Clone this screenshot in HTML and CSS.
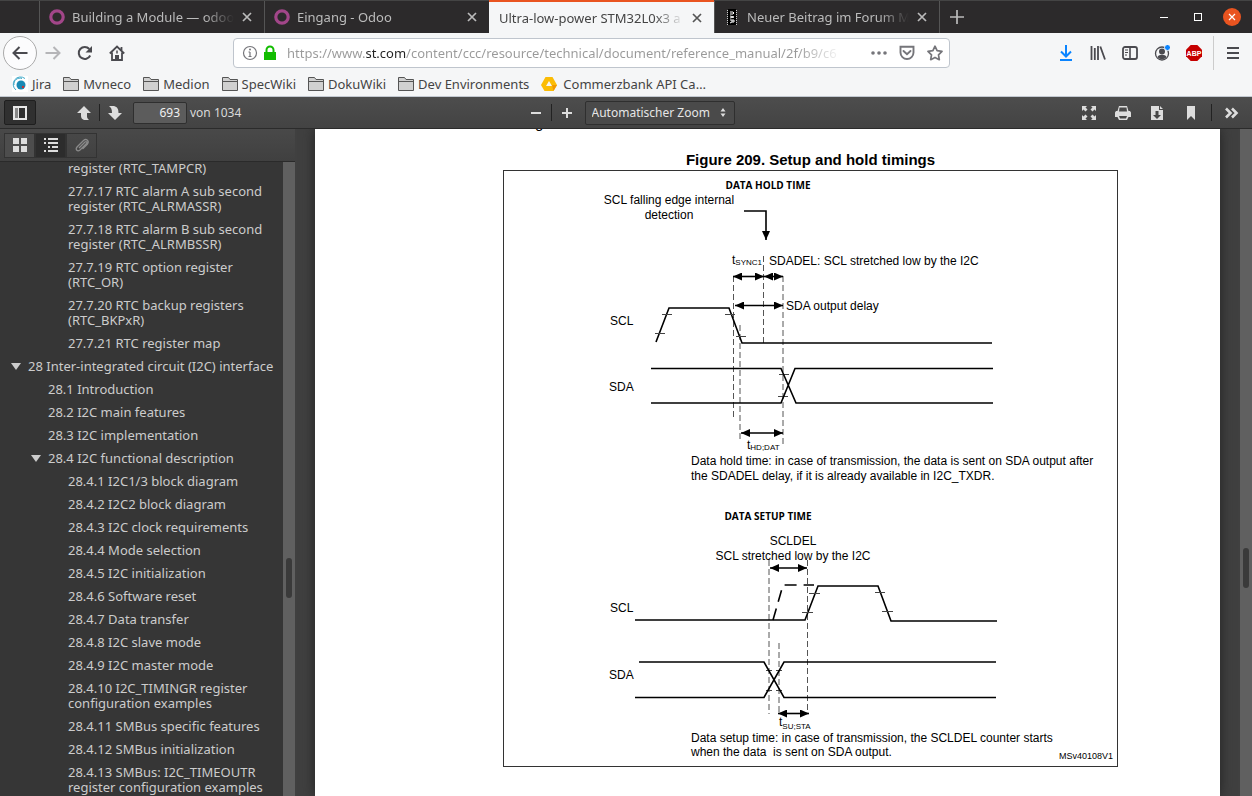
FILE: index.html
```
<!DOCTYPE html>
<html lang="de">
<head>
    <meta charset="UTF-8">
    <meta name="viewport" content="width=device-width, initial-scale=1.0">
    <title>Ultra-low-power STM32L0x3 reference manual</title>
    <link rel="stylesheet" href="styles.css">
</head>
<body>

<header class="browser">
    <div class="tab-bar">
        <div class="tab">
            <svg class="favicon" width="16" height="16" viewBox="0 0 16 16"><circle cx="8" cy="8" r="6.2" fill="none" stroke="#a24689" stroke-width="3.2"/></svg>
            <span class="tab-title">Building a Module — odoo</span>
            <button class="tab-close" aria-label="Tab schließen"><svg width="10" height="10" viewBox="0 0 10 10"><path d="M1 1l8 8M9 1l-8 8"/></svg></button>
        </div>
        <div class="tab">
            <svg class="favicon" width="16" height="16" viewBox="0 0 16 16"><circle cx="8" cy="8" r="6.2" fill="none" stroke="#a24689" stroke-width="3.2"/></svg>
            <span class="tab-title">Eingang - Odoo</span>
            <button class="tab-close" aria-label="Tab schließen"><svg width="10" height="10" viewBox="0 0 10 10"><path d="M1 1l8 8M9 1l-8 8"/></svg></button>
        </div>
        <div class="tab active">
            <span class="tab-title">Ultra-low-power STM32L0x3 a</span>
            <button class="tab-close" aria-label="Tab schließen"><svg width="10" height="10" viewBox="0 0 10 10"><path d="M1 1l8 8M9 1l-8 8"/></svg></button>
        </div>
        <div class="tab">
            <svg class="favicon" width="16" height="16" viewBox="0 0 16 16">
                <rect x="4" y="0" width="8" height="16" fill="#000"/>
                <path d="M3.500 1v15M12.500 1v15" stroke="#ccc" stroke-dasharray="1 1"/>
                <path d="M6 3h3l1 1-1 1H6M6 7l4 1-4 1M6 11h4v2H8v-2M8 13l-2 1" stroke="#fff" fill="none"/>
            </svg>
            <span class="tab-title">Neuer Beitrag im Forum Mik</span>
            <button class="tab-close" aria-label="Tab schließen"><svg width="10" height="10" viewBox="0 0 10 10"><path d="M1 1l8 8M9 1l-8 8"/></svg></button>
        </div>
        <button class="new-tab" aria-label="Neuer Tab"><svg width="14" height="14" viewBox="0 0 14 14"><path d="M7 0v14M0 7h14"/></svg></button>
        <div class="window-buttons">
            <button aria-label="Minimieren"><svg width="18" height="18" viewBox="0 0 18 18"><path d="M5 9.500h8" stroke="#fff"/></svg></button>
            <button aria-label="Maximieren"><svg width="18" height="18" viewBox="0 0 18 18"><rect x="5.500" y="5.500" width="7" height="7" fill="none" stroke="#fff"/></svg></button>
            <button aria-label="Schließen"><svg width="18" height="18" viewBox="0 0 18 18"><circle cx="9" cy="9" r="9" fill="#e95420"/><path d="M6 6l6 6M12 6l-6 6" stroke="#fff" stroke-width="1.2"/></svg></button>
        </div>
    </div>

    <div class="nav-bar">
        <button class="nav-button back" aria-label="Zurück"><svg width="16" height="16" viewBox="0 0 16 16"><path d="M15.500 8H1.500M7.500 2l-6 6 6 6" stroke-width="2"/></svg></button>
        <button class="nav-button forward" aria-label="Vor"><svg width="16" height="16" viewBox="0 0 16 16"><path d="M0.500 8h14M8.500 2l6 6-6 6" stroke-width="2"/></svg></button>
        <button class="nav-button" aria-label="Neu laden"><svg width="16" height="16" viewBox="0 0 16 16"><path d="M13.200 10.500A6 6 0 1 1 12.300 4" stroke-width="2"/><path d="M15 1v6.500H8.500z" fill="#4a4a4f" stroke="none"/></svg></button>
        <button class="nav-button" aria-label="Startseite"><svg width="16" height="16" viewBox="0 0 16 16"><path d="M.8 8.500L8 1.500l7.200 7M3 7.500V15h10V7.500M12.500 2v3.500" stroke-width="1.800"/><path d="M6 15v-5h4v5z" fill="#4a4a4f" stroke="none"/><path d="M8 5.500v3" stroke-width="1.500"/></svg></button>
        <div class="url-bar">
            <svg width="16" height="16" viewBox="0 0 16 16"><circle cx="8" cy="8" r="6.500" fill="none" stroke="#75757a" stroke-width="1.200"/><path d="M8 7v5M6.500 7H8M6.500 11.500h3" stroke="#75757a" stroke-width="1.200"/><circle cx="8" cy="4.500" r="1" fill="#75757a"/></svg>
            <svg width="16" height="16" viewBox="0 0 16 16"><path d="M2 7h12v8H2z" fill="#12bc00"/><path d="M4.500 8V5a3.500 3.500 0 0 1 7 0v3" fill="none" stroke="#12bc00" stroke-width="2"/></svg>
            <input type="text" class="url-input" aria-label="Adresse" value="https://www.st.com/content/ccc/resource/technical/document/reference_manual/2f/b9/c6">
            <button class="url-button" aria-label="Seitenaktionen"><svg width="16" height="16" viewBox="0 0 16 16" fill="#75757a"><circle cx="2" cy="8" r="1.800"/><circle cx="8" cy="8" r="1.800"/><circle cx="14" cy="8" r="1.800"/></svg></button>
            <button class="url-button" aria-label="Pocket"><svg width="16" height="16" viewBox="0 0 16 16" fill="none" stroke="#75757a" stroke-width="1.900"><path d="M1.500 1.800h13v5.700a6.500 6.500 0 0 1-13 0z"/><path d="M4.500 6L8 9.300 11.500 6" stroke-linecap="round"/></svg></button>
            <button class="url-button" aria-label="Lesezeichen"><svg width="16" height="16" viewBox="0 0 16 16" fill="none" stroke="#75757a" stroke-width="1.700" stroke-linejoin="round"><path d="M8 1.200l2.100 4.500 4.900.7-3.500 3.400.8 4.900L8 12.400l-4.300 2.300.8-4.900L1 6.400l4.900-.7z"/></svg></button>
        </div>
        <div class="nav-extras">
            <button class="nav-button" aria-label="Downloads"><svg width="16" height="16" viewBox="0 0 16 16"><path d="M8 0v11M3 6.500l5 5 5-5M2 15h12" stroke="#0a84ff" stroke-width="2"/></svg></button>
            <button class="nav-button" aria-label="Bibliothek"><svg width="16" height="16" viewBox="0 0 16 16"><path d="M1.500 1v14M4.800 3v12M8 1v14M10.300 1.500L15 14.500" stroke-width="1.800"/></svg></button>
            <button class="nav-button" aria-label="Sidebars"><svg width="16" height="16" viewBox="0 0 16 16"><rect x="1" y="2" width="14" height="12" rx="2" stroke-width="1.800"/><path d="M8 2v12" stroke-width="1.600"/><path d="M3 5h3M3 7.500h3M3 10h2"/></svg></button>
            <button class="nav-button" aria-label="Konto"><svg width="16" height="16" viewBox="0 0 16 16"><circle cx="8" cy="8.500" r="6.500" stroke-width="1.300"/><circle cx="8" cy="6.500" r="3" fill="#4a4a4f" stroke="none"/><path d="M3.500 12c1-3 8-3 9 0-2 3-7 3-9 0z" fill="#4a4a4f" stroke="none"/><circle cx="13.500" cy="2.500" r="3" fill="#0a84ff" stroke="#f5f6f7"/></svg></button>
            <button class="nav-button abp" aria-label="Adblock Plus"><svg width="16" height="16" viewBox="0 0 16 16"><path d="M4.700 0h6.600L16 4.700v6.600L11.300 16H4.700L0 11.300V4.700z" fill="#c60000" stroke="none"/><text x="8" y="11" class="abp-text">ABP</text></svg></button>
            <span class="nav-divider"></span>
            <button class="nav-button menu" aria-label="Menü"><svg width="16" height="16" viewBox="0 0 16 16"><path d="M2 3h12M2 8h12M2 13h12" stroke-width="2"/></svg></button>
        </div>
    </div>

    <nav class="bookmarks">
        <a href="#"><svg width="16" height="16" viewBox="0 0 16 16"><rect width="16" height="16" fill="#fff"/><circle cx="9" cy="9" r="4.500" fill="#1a8ab5"/><path d="M4 14A7 7 0 0 1 13 2.500M2 9a6 6 0 0 1 8-6.500" fill="none" stroke="#3fa9c9"/><circle cx="11" cy="11" r="1.200" fill="#c33"/></svg>Jira</a>
        <a href="#"><svg width="16" height="16" viewBox="0 0 16 16"><path d="M.5 14.500v-13h6l1.500 2h7.500v11z" fill="#d0d0d0" stroke="#555"/><path d="M1 5.500h14.500" stroke="#555"/></svg>Mvneco</a>
        <a href="#"><svg width="16" height="16" viewBox="0 0 16 16"><path d="M.5 14.500v-13h6l1.500 2h7.500v11z" fill="#d0d0d0" stroke="#555"/><path d="M1 5.500h14.500" stroke="#555"/></svg>Medion</a>
        <a href="#"><svg width="16" height="16" viewBox="0 0 16 16"><path d="M.5 14.500v-13h6l1.500 2h7.500v11z" fill="#d0d0d0" stroke="#555"/><path d="M1 5.500h14.500" stroke="#555"/></svg>SpecWiki</a>
        <a href="#"><svg width="16" height="16" viewBox="0 0 16 16"><path d="M.5 14.500v-13h6l1.500 2h7.500v11z" fill="#d0d0d0" stroke="#555"/><path d="M1 5.500h14.500" stroke="#555"/></svg>DokuWiki</a>
        <a href="#"><svg width="16" height="16" viewBox="0 0 16 16"><path d="M.5 14.500v-13h6l1.500 2h7.500v11z" fill="#d0d0d0" stroke="#555"/><path d="M1 5.500h14.500" stroke="#555"/></svg>Dev Environments</a>
        <a href="#" class="wide"><svg width="16" height="16" viewBox="0 0 16 16"><path d="M4.500 1h7L16 9l-3.500 6h-9L0 9z" fill="#fbbc05"/><path d="M12.500 15L16 9h-5z" fill="#f29900"/><path d="M8 5l3 5H5z" fill="#f5f6f7"/></svg>Commerzbank API Ca…</a>
    </nav>
</header>

<div class="pdf-toolbar">
    <div class="tools">
        <button class="tool toggled" aria-label="Sidebar umschalten"><svg width="16" height="16" viewBox="0 0 16 16"><path d="M2 2h12v12H2z" fill="none" stroke="#e8e8e8" stroke-width="2"/><path d="M3 3h3v10H3z" fill="#888"/><path d="M6.500 3v10" stroke="#e8e8e8"/></svg></button>
        <div class="tool-pair page-nav">
            <button class="tool narrow" aria-label="Vorherige Seite"><svg width="16" height="16" viewBox="0 0 16 16"><path d="M8 1l7 7h-4v3.500c0 1.500 1 2.500 2 3.500H8c-2-1-3-2-3-4V8H1z"/></svg></button>
            <span class="split"></span>
            <button class="tool narrow" aria-label="Nächste Seite"><svg width="16" height="16" viewBox="0 0 16 16"><path d="M8 15l7-7h-3.500c0-4-1-6-4.500-7H2c2 1.500 3 3 3 7H1z"/></svg></button>
        </div>
        <input type="text" id="pageNumber" class="page-number" value="693" aria-label="Seite">
        <label for="pageNumber" class="page-count">von 1034</label>
    </div>
    <div class="tools zoom-tools">
        <button class="tool narrow" aria-label="Verkleinern"><svg width="16" height="16" viewBox="0 0 16 16"><path d="M3 7h10v2H3z"/></svg></button>
        <span class="split"></span>
        <button class="tool narrow" aria-label="Vergrößern"><svg width="16" height="16" viewBox="0 0 16 16"><path d="M3 7h4V3h2v4h4v2H9v4H7V9H3z"/></svg></button>
        <div class="zoom-box">
            <select class="zoom-select" aria-label="Zoom">
                <option>Automatischer Zoom</option>
            </select>
            <svg class="zoom-arrows" width="6" height="10" viewBox="0 0 6 10"><path d="M3 0l2.500 3.500h-5zM3 9L.5 5.500h5z"/></svg>
        </div>
    </div>
    <div class="tools right">
        <button class="tool" aria-label="Präsentationsmodus"><svg width="16" height="16" viewBox="0 0 16 16"><path d="M1 1h5L4.500 2.500l2 2-2 2-2-2L1 6zM15 1v5l-1.500-1.500-2 2-2-2 2-2L10 1zM1 15v-5l1.500 1.500 2-2 2 2-2 2L6 15zM15 15h-5l1.500-1.500-2-2 2-2 2 2L15 10z"/></svg></button>
        <button class="tool" aria-label="Drucken"><svg width="16" height="16" viewBox="0 0 16 16"><path d="M4 1h8l1.500 5H15l1 1.500V12h-2.500L12 15H4l-1.500-3H0V7.500L1 6h1.500zM4.500 2.500L4 6.500h8l-.5-4zM4 11l1 2.500h6l1-2.500z" fill-rule="evenodd"/></svg></button>
        <button class="tool" aria-label="Herunterladen"><svg width="16" height="16" viewBox="0 0 16 16"><path d="M2 1h8v4h4v10H2zM11 1l3 3h-3zM6.500 6v4H4l4 4 4-4H9.500V6z" fill-rule="evenodd"/></svg></button>
        <button class="tool" aria-label="Aktuelle Ansicht"><svg width="16" height="16" viewBox="0 0 16 16"><path d="M4 1h8v14l-4-4-4 4z"/></svg></button>
        <span class="split"></span>
        <button class="tool" aria-label="Werkzeuge"><svg width="16" height="16" viewBox="0 0 16 16"><path d="M2 3.500L6.500 8 2 12.500M8 3.500L12.500 8 8 12.500" fill="none" stroke="#ddd" stroke-width="2.600"/></svg></button>
    </div>
</div>

<main class="workspace">
    <aside class="sidebar">
        <div class="sidebar-tools">
            <button aria-label="Miniaturansichten"><svg width="16" height="16" viewBox="0 0 16 16"><path d="M1 1h6v6H1zM9 1h6v6H9zM1 9h6v6H1zM9 9h6v6H9z"/></svg></button>
            <button class="on" aria-label="Dokumentstruktur"><svg width="16" height="16" viewBox="0 0 16 16"><path d="M1 1h2v2H1zM5 1h10v2H5zM1 5h2v2H1zM5 5h10v2H5zM5 9h2v2H5zM9 9h6v2H9zM1 13h2v2H1zM5 13h10v2H5z"/></svg></button>
            <button class="off" aria-label="Anhänge"><svg width="16" height="16" viewBox="0 0 16 16"><path d="M5 11l6-6c1.500-1 2.500.5 1.500 1.500l-6.500 6.500c-2.500 2-5-.5-3-3l6.500-6.500c3-2.500 6 .5 4 3.500l-5 5" fill="none" stroke="#8a8a8a" stroke-width="1.300"/></svg></button>
        </div>
        <div class="outline">
            <ul class="tree">
                <li class="level-3"><a href="#">register (RTC_TAMPCR)</a></li>
                <li class="level-3"><a href="#">27.7.17 RTC alarm A sub second register (RTC_ALRMASSR)</a></li>
                <li class="level-3"><a href="#">27.7.18 RTC alarm B sub second register (RTC_ALRMBSSR)</a></li>
                <li class="level-3"><a href="#">27.7.19 RTC option register (RTC_OR)</a></li>
                <li class="level-3"><a href="#">27.7.20 RTC backup registers (RTC_BKPxR)</a></li>
                <li class="level-3"><a href="#">27.7.21 RTC register map</a></li>
                <li class="level-1 open"><a href="#">28 Inter-integrated circuit (I2C) interface</a></li>
                <li class="level-2"><a href="#">28.1 Introduction</a></li>
                <li class="level-2"><a href="#">28.2 I2C main features</a></li>
                <li class="level-2"><a href="#">28.3 I2C implementation</a></li>
                <li class="level-2 open"><a href="#">28.4 I2C functional description</a></li>
                <li class="level-3"><a href="#">28.4.1 I2C1/3 block diagram</a></li>
                <li class="level-3"><a href="#">28.4.2 I2C2 block diagram</a></li>
                <li class="level-3"><a href="#">28.4.3 I2C clock requirements</a></li>
                <li class="level-3"><a href="#">28.4.4 Mode selection</a></li>
                <li class="level-3"><a href="#">28.4.5 I2C initialization</a></li>
                <li class="level-3"><a href="#">28.4.6 Software reset</a></li>
                <li class="level-3"><a href="#">28.4.7 Data transfer</a></li>
                <li class="level-3"><a href="#">28.4.8 I2C slave mode</a></li>
                <li class="level-3"><a href="#">28.4.9 I2C master mode</a></li>
                <li class="level-3"><a href="#">28.4.10 I2C_TIMINGR register configuration examples</a></li>
                <li class="level-3"><a href="#">28.4.11 SMBus specific features</a></li>
                <li class="level-3"><a href="#">28.4.12 SMBus initialization</a></li>
                <li class="level-3"><a href="#">28.4.13 SMBus: I2C_TIMEOUTR register configuration examples</a></li>
            </ul>
            <div class="scrollbar"><div class="thumb"></div></div>
        </div>
    </aside>

    <section class="viewer">
        <article class="page">
            <p class="body-text">g</p>
            <figure>
                <figcaption>Figure 209. Setup and hold timings</figcaption>
                <!-- user units follow the page, so the box starts at 503,170 -->
                <svg class="timing" width="615" height="598" viewBox="503 170 615 598">
                    <defs>
                        <marker id="arrow" viewBox="0 0 9 8" refX="9" refY="4" markerWidth="9" markerHeight="8" markerUnits="userSpaceOnUse" orient="auto-start-reverse">
                            <path d="M0 0l9 4-9 4z"/>
                        </marker>
                    </defs>
                    <rect class="frame" x="503.500" y="170.500" width="614" height="596"/>

                    <!-- data hold time -->
                    <text class="heading" x="768" y="189">DATA HOLD TIME</text>
                    <text class="mid" x="669" y="204">SCL falling edge internal</text>
                    <text class="mid" x="669" y="219">detection</text>
                    <path class="line" d="M744 211h22v29" marker-end="url(#arrow)"/>
                    <text x="732" y="264">t<tspan class="sub" dy="1">SYNC1</tspan></text>
                    <text x="769" y="265">SDADEL: SCL stretched low by the I2C</text>
                    <text x="786" y="310">SDA output delay</text>
                    <text x="610" y="325">SCL</text>
                    <text x="609" y="391">SDA</text>
                    <path class="dash" d="M733.500 276v141M763.500 256v88M783 276v168M740 325v116"/>
                    <g class="arrows">
                        <path d="M733 276.500h31"/>
                        <path d="M764 276.500h19"/>
                        <path d="M735 305.500h48"/>
                        <path d="M741 433h42"/>
                    </g>
                    <path class="line" d="M656 342l13-34h60l13 35h250"/>
                    <path class="tick" d="M662 314.500h10M655 333.500h10M725 314.500h10M736 336.500h10M779 374.500h10M778 396.500h10"/>
                    <path class="line" d="M651 368.500h130l15 34.500h197M651 403h130l14-34.500h198"/>
                    <text x="747" y="449">t<tspan class="sub" dy="1">HD;DAT</tspan></text>
                    <text x="691" y="465">Data hold time: in case of transmission, the data is sent on SDA output after</text>
                    <text x="691" y="480">the SDADEL delay, if it is already available in I2C_TXDR.</text>

                    <!-- data setup time -->
                    <text class="heading" x="768" y="520">DATA SETUP TIME</text>
                    <text class="mid" x="793" y="545">SCLDEL</text>
                    <text class="mid" x="793" y="560">SCL stretched low by the I2C</text>
                    <text x="610" y="612">SCL</text>
                    <text x="609" y="679">SDA</text>
                    <path class="dash" d="M769 560v154M807.500 560v153M779 643v71"/>
                    <g class="arrows">
                        <path d="M770 568h37"/>
                        <path d="M778 713.500h31"/>
                    </g>
                    <path class="line long-dash" d="M773 620l10-35h31"/>
                    <path class="line" d="M635 620h170l13-34h60l13 35h106"/>
                    <path class="tick" d="M809 593.500h11M802 612.500h11M875 592.500h10M882 611.500h11M766 670.500h6M776 670.500h6M766 690.500h6M776 690.500h6"/>
                    <path class="line" d="M639 662h125l20 35.500h212M635 697.500h129l20-35.500h212"/>
                    <text x="779" y="726">t<tspan class="sub" dy="3">SU;STA</tspan></text>
                    <text x="691" y="742">Data setup time: in case of transmission, the SCLDEL counter starts</text>
                    <text x="691" y="756" xml:space="preserve">when the data  is sent on SDA output.</text>
                    <text class="code" x="1059" y="759">MSv40108V1</text>
                </svg>
            </figure>
        </article>
        <div class="scrollbar"><div class="thumb"></div></div>
    </section>
</main>

</body>
</html>
```

FILE: styles.css
```
* {
    box-sizing: border-box;
}
body {
    margin: 0;
    height: 100vh;
    overflow: hidden;
    display: flex;
    flex-direction: column;
    font-family: "Noto Sans", sans-serif;
    font-size: 13px;
    background: #404040;
}
button {
    padding: 0;
    border: none;
    background: none;
    display: flex;
    align-items: center;
    justify-content: center;
    cursor: pointer;
}
svg {
    flex: none;
}

/* Tabs */
.browser {
    flex: none;
    background: #f5f6f7;
    border-bottom: 1px solid #c3c9d1;
}
.tab-bar {
    display: flex;
    height: 33px;
    padding-left: 39px;
    background: #2c2a2b;
    border-top: 1px solid #444;
}
.tab {
    display: flex;
    align-items: center;
    flex: 0 1 225px;
    min-width: 0;
    padding: 0 7px 0 9px;
    border-left: 1px solid #555;
    color: #bbb;
}
.tab.active {
    margin-top: -1px;
    padding-left: 10px;
    background: #f5f6f7;
    border-top: 2px solid #e95420;
    border-left: none;
    color: #444;
}
.favicon {
    margin-right: 7px;
}
.tab-title {
    flex: 1;
    overflow: hidden;
    white-space: nowrap;
    mask-image: linear-gradient(to left, transparent, #000 30px);
}
.tab-close {
    width: 20px;
    height: 20px;
    margin-left: 3px;
}
.tab-close svg, .new-tab svg {
    fill: none;
    stroke: #bbb;
    stroke-width: 1.7;
}
.active .tab-close svg {
    stroke: #555;
}
.new-tab {
    width: 34px;
    border-left: 1px solid #555;
}
.window-buttons {
    display: flex;
    gap: 16px;
    margin-left: auto;
    padding-right: 11px;
}

/* Navigation */
.nav-bar {
    display: flex;
    align-items: center;
    height: 40px;
    padding: 0 3px;
}
.nav-button {
    width: 32px;
    height: 32px;
}
.nav-button svg {
    fill: none;
    stroke: #4a4a4f;
}
.nav-button.back {
    width: 34px;
    height: 34px;
    background: #fcfcfd;
    border: 1px solid #aaa;
    border-radius: 50%;
}
.nav-button.forward svg {
    stroke: #b5b5b8;
}
.url-bar {
    display: flex;
    align-items: center;
    flex: 1;
    gap: 4px;
    height: 30px;
    margin: 0 100px;
    padding: 0 2px 0 8px;
    background: #fff;
    border: 1px solid #bfc5cd;
    border-radius: 4px;
}
.url-input {
    flex: 1;
    min-width: 0;
    margin-left: 5px;
    padding: 0;
    border: none;
    outline: none;
    font: inherit;
    color: transparent;
    background: linear-gradient(to right, #999 79px, #222 79px, #222 119px, #999 119px, #999 510px, transparent 556px);
    -webkit-background-clip: text;
    background-clip: text;
}
.url-button {
    width: 24px;
    height: 24px;
}
.nav-extras {
    display: flex;
    align-items: center;
}
.abp-text {
    font: bold 7px "Liberation Sans", sans-serif;
    fill: #fff;
    stroke: none;
    text-anchor: middle;
}
.nav-divider {
    height: 34px;
    margin: 0 3px;
    border-left: 1px solid #ccc;
}

/* Bookmarks */
.bookmarks {
    display: flex;
    align-items: center;
    gap: 12px;
    height: 23px;
    padding: 0 0 2px 12px;
}
.bookmarks a {
    display: flex;
    align-items: center;
    gap: 4px;
    color: #444;
    text-decoration: none;
    white-space: nowrap;
}
.bookmarks a.wide {
    gap: 6px;
}

/* PDF toolbar */
.pdf-toolbar {
    flex: none;
    display: grid;
    grid-template-columns: 1fr auto 1fr;
    height: 32px;
    padding: 0 4px;
    background: linear-gradient(#4d4d4d, #434343);
    border-bottom: 1px solid #2b2b2b;
    position: relative;
    z-index: 1;
}
.tools {
    display: flex;
    align-items: center;
    color: #d9d9d9;
}
.tools.right {
    justify-content: flex-end;
    gap: 2px;
}
.right .split {
    margin: 0 2px;
}
.zoom-tools {
    margin-left: 3px;
}
.tool {
    width: 32px;
    height: 25px;
    border-radius: 2px;
}
.tool.narrow {
    width: 30px;
}
.tool svg, .sidebar-tools svg, .zoom-arrows {
    fill: #ddd;
}
.tool.toggled {
    background: #303030;
    border: 1px solid #1f1f1f;
}
.tool-pair {
    display: flex;
    align-items: center;
}
.page-nav {
    margin-left: 33px;
}
.split {
    width: 1px;
    height: 17px;
    background: #222;
}
.page-number {
    width: 54px;
    height: 22px;
    margin: 0 3px;
    padding: 0 6px;
    border: 1px solid #2f2f2f;
    border-radius: 2px;
    background: #5c5c5c;
    color: #f0f0f0;
    font: inherit;
    font-size: 12px;
    text-align: right;
}
.page-count {
    font-size: 12px;
}
.zoom-box {
    position: relative;
    margin-left: 3px;
}
.zoom-select {
    appearance: none;
    display: block;
    width: 150px;
    height: 24px;
    padding: 0 6px;
    border: 1px solid #2f2f2f;
    border-radius: 2px;
    background: #4a4a4a;
    color: #e6e6e6;
    font: inherit;
    font-size: 12px;
}
.zoom-arrows {
    position: absolute;
    right: 9px;
    top: 7px;
    pointer-events: none;
}

/* Sidebar */
.workspace {
    flex: 1;
    display: flex;
    min-height: 0;
}
.sidebar {
    flex: none;
    width: 295px;
    display: flex;
    flex-direction: column;
    background: #363636;
}
.sidebar-tools {
    flex: none;
    display: flex;
    align-items: center;
    height: 33px;
    padding: 0 4px;
    background: linear-gradient(#494949, #404040);
    border-bottom: 1px solid #2a2a2a;
}
.sidebar-tools button {
    width: 31px;
    height: 25px;
    border: 1px solid #333;
    background: #4d4d4d;
}
.sidebar-tools button.on {
    background: #2c2c2c;
}
.sidebar-tools button.off {
    background: none;
}
.outline {
    flex: 1;
    display: flex;
    min-height: 0;
    overflow: hidden;
}
.tree {
    flex: 1;
    margin: -5px 0 0;
    padding: 0;
    list-style: none;
}
.tree li {
    position: relative;
    padding: 4px 20px 4px 0;
    line-height: 15px;
}
.tree a {
    color: #ccc;
    text-decoration: none;
}
.tree .level-1 {
    margin-left: 28px;
    padding-right: 0;
}
.tree .level-2 {
    margin-left: 48px;
}
.tree .level-3 {
    margin-left: 68px;
}
.tree .open::before {
    content: "";
    position: absolute;
    left: -17px;
    top: 8px;
    border: 5px solid transparent;
    border-top: 7px solid #ccc;
    border-bottom: none;
}
.scrollbar {
    flex: none;
    width: 12px;
    padding: 0 3px;
    background: #606060;
}
.thumb {
    height: 40px;
    border-radius: 3px;
    background: #3a3a3a;
}
.outline .thumb {
    margin-top: 396px;
}

/* Document */
.viewer {
    flex: 1;
    display: flex;
    min-width: 0;
    overflow: hidden;
    background: #404040;
}
.viewer .thumb {
    margin-top: 419px;
}
.page {
    flex: 1;
    min-width: 0;
    margin: 0 20px;
    padding-left: 188px;
    background: #fff;
    color: #000;
    box-shadow: 0 0 12px #222;
    font-family: "Liberation Sans", sans-serif;
}
.body-text {
    height: 20px;
    margin: -14px 0 15px 32px;
    font-size: 15px;
    line-height: 16px;
}
figure {
    width: 615px;
    margin: 0;
}
figcaption {
    padding-bottom: 1px;
    font-size: 15px;
    font-weight: bold;
    line-height: 19px;
    text-align: center;
}
.timing {
    display: block;
    font-size: 12px;
}
.timing .heading {
    font: bold 10px "Open Sans", sans-serif;
    text-anchor: middle;
}
.timing .mid {
    text-anchor: middle;
}
.timing .sub {
    font-size: 8px;
}
.timing .code {
    font-size: 9px;
}
.frame {
    fill: none;
    stroke: #333;
}
.line, .arrows path {
    fill: none;
    stroke: #000;
    stroke-width: 1.6;
}
.arrows path {
    marker-start: url(#arrow);
    marker-end: url(#arrow);
}
.long-dash {
    stroke-dasharray: 12 7;
}
.dash {
    fill: none;
    stroke: #555;
    stroke-dasharray: 6 3;
}
.tick {
    stroke: #444;
}
```
